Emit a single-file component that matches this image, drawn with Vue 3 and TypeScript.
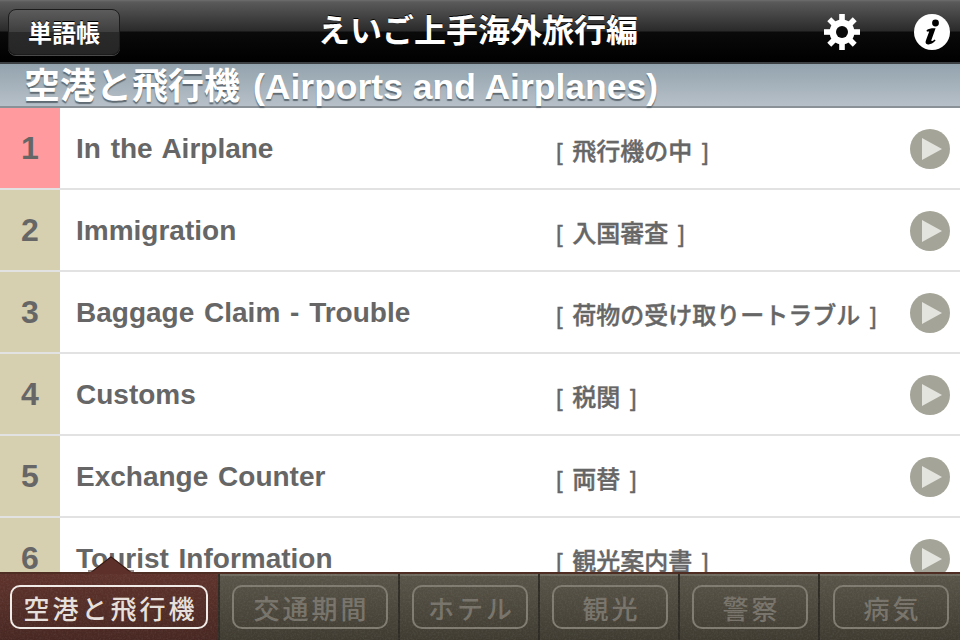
<script setup lang="ts">
interface Lesson { n: number; en: string; ja: string }
const lessons: Lesson[] = [
  { n: 1, en: 'In the Airplane', ja: '[ 飛行機の中 ]' },
  { n: 2, en: 'Immigration', ja: '[ 入国審査 ]' },
  { n: 3, en: 'Baggage Claim - Trouble', ja: '[ 荷物の受け取りートラブル ]' },
  { n: 4, en: 'Customs', ja: '[ 税関 ]' },
  { n: 5, en: 'Exchange Counter', ja: '[ 両替 ]' },
  { n: 6, en: 'Tourist Information', ja: '[ 観光案内書 ]' },
]
const tabs = ['空港と飛行機', '交通期間', 'ホテル', '観光', '警察', '病気']
</script>

<template>
  <div class="app">
    <header class="nav">
      <button class="back">単語帳</button>
      <h1 class="title">えいご上手海外旅行編</h1>
      <div class="nav-icons">
        <svg class="gear" width="36" height="36" viewBox="0 0 36 36">
          <g fill="#fff">
            <rect v-for="a in [0,45,90,135]" :key="a" x="15.2" y="0" width="5.6" height="36" :transform="`rotate(${a} 18 18)`" />
            <circle cx="18" cy="18" r="12.5" />
          </g>
          <circle cx="18" cy="18" r="6" fill="#0a0a0a" />
        </svg>
        <svg class="info" width="36" height="36" viewBox="0 0 36 36">
          <circle cx="18" cy="18" r="18" fill="#fff" />
          <circle cx="21.5" cy="9" r="3.4" fill="#000" />
          <path d="M12.5 16.2 C15 14.3 18 14 21.6 14.2 L17.4 26 C17 27.3 18 27.6 20.6 25.4 L21.6 26.6 C18.5 30 15.5 30.8 13.2 30.2 C11.4 29.6 11.3 28 11.9 26.4 L15.2 17.6 C14.6 17.3 13.6 17.5 13 17.8 Z" fill="#000" />
        </svg>
      </div>
    </header>
    <div class="section">空港と飛行機<span class="section-en">(Airports and Airplanes)</span></div>
    <main class="list">
      <div v-for="l in lessons" :key="l.n" class="row">
        <div class="num" :class="{ active: l.n === 1 }">{{ l.n }}</div>
        <div class="en">{{ l.en }}</div>
        <div class="ja">{{ l.ja }}</div>
        <svg class="play" width="40" height="40" viewBox="0 0 40 40">
          <circle cx="20" cy="20" r="20" fill="#a5a498" />
          <path d="M12 9 L32 20 L12 31 Z" fill="#e4e4de" />
        </svg>
      </div>
    </main>
    <nav class="tabbar">
      <div v-for="(t, i) in tabs" :key="t" class="tab" :class="{ on: i === 0 }">
        <span class="tab-btn">{{ t }}</span>
      </div>
      <svg class="caret" width="46" height="18" viewBox="0 0 46 18">
        <path d="M0 18 L23 0 L46 18 Z" fill="#5d3029" />
        <path d="M0 15 L5 15 L23 1 L41 15 L46 15" fill="none" stroke="#2e1a14" stroke-width="1" />
      </svg>
      <svg class="noise" width="960" height="68">
        <filter id="grain">
          <feTurbulence type="fractalNoise" baseFrequency="0.55" numOctaves="2" seed="4" />
          <feColorMatrix type="matrix" values="0 0 0 0 0.6  0 0 0 0 0.6  0 0 0 0 0.6  0.9 0 0 0 -0.35" />
        </filter>
        <rect width="960" height="68" filter="url(#grain)" opacity="0.2" />
      </svg>
    </nav>
  </div>
</template>

<style>
html, body { margin: 0; background: #fff; }
</style>

<style scoped>
.app {
  width: 960px;
  height: 640px;
  display: flex;
  flex-direction: column;
  overflow: hidden;
  font-family: "Liberation Sans", "Noto Sans CJK JP", sans-serif;
  background: #fff;
  position: relative;
}
.nav {
  height: 62px;
  flex: none;
  display: flex;
  align-items: center;
  position: relative;
  padding: 0 8px;
  background: linear-gradient(#6e6e6e 0, #5a5a5a 2px, #2a2a2a 31px, #0a0a0a 32px, #000 62px);
  border-bottom: 2px solid #3c3f42;
}
.back {
  width: 112px;
  height: 46px;
  margin-top: 1px;
  box-sizing: border-box;
  border: 1px solid #1c1c1c;
  border-radius: 8px;
  background: linear-gradient(#5c5c5c, #3e3e3e 50%, #2a2a2a 50%, #262626);
  box-shadow: 0 1px 0 #4a4a4a;
  color: #fff;
  font: 700 24px "Liberation Sans", "Noto Sans CJK JP", sans-serif;
  padding: 0;
  text-shadow: 0 -1px 0 #000;
}
.title {
  position: absolute;
  left: 318px;
  top: 11px;
  margin: 0;
  font-size: 32px;
  line-height: 40px;
  font-weight: 700;
  color: #fff;
  white-space: nowrap;
  text-shadow: 0 -1px 0 #000;
}
.nav-icons {
  margin-left: auto;
  display: flex;
  align-items: center;
  gap: 54px;
  padding-right: 2px;
  margin-top: 2px;
}
.section {
  height: 40px;
  flex: none;
  padding: 2px 0 0 24px;
  font-size: 36px;
  font-weight: 700;
  line-height: 42px;
  color: #fff;
  white-space: nowrap;
  background: linear-gradient(#93a3ae, #b7c0c8);
  border-bottom: 2px solid #8a9298;
  text-shadow: 0 2px 1px #5f6a72;
}
.section-en {
  font-size: 35.5px;
  margin-left: 13px;
}
.list {
  flex: 1;
  min-height: 0;
  overflow: hidden;
}
.row {
  height: 80px;
  display: flex;
  align-items: center;
  border-bottom: 2px solid #e2e2e2;
  color: #666;
}
.num {
  width: 60px;
  height: 80px;
  flex: none;
  display: flex;
  align-items: center;
  justify-content: center;
  background: #d6cfb0;
  font-size: 32px;
  font-weight: 700;
  box-sizing: border-box;
}
.num.active { background: #ff9a9e; }
.en {
  width: 480px;
  flex: none;
  padding-left: 16px;
  box-sizing: border-box;
  font-size: 28px;
  font-weight: 700;
  word-spacing: 2px;
  padding-top: 2px;
}
.ja {
  flex: 1;
  margin-left: 16px;
  font-size: 24px;
  font-weight: 500;
  word-spacing: 3px;
  white-space: nowrap;
  padding-top: 2px;
  -webkit-text-stroke: 0.4px #666;
}
.play { flex: none; margin-right: 10px; margin-top: 2px; }
.tabbar {
  height: 68px;
  flex: none;
  display: flex;
  position: relative;
  border-top: 2px solid #4f2d22;
  box-sizing: border-box;
  background: linear-gradient(#5a5549, #3f3b31);
}
.tab {
  width: 140px;
  flex: none;
  box-sizing: border-box;
  display: flex;
  align-items: center;
  justify-content: center;
  border-right: 2px solid #2f2c25;
  box-shadow: inset 0 2px 0 #706b5f;
}
.tab:nth-child(1) { width: 220px; }
.tab:nth-child(2) { width: 180px; }
.tab:nth-child(6) { border-right: none; }
.tab.on {
  background: linear-gradient(#5f332c, #482722);
  box-shadow: none;
}
.tab-btn {
  display: flex;
  align-items: center;
  justify-content: center;
  box-sizing: border-box;
  width: 116px;
  height: 44px;
  margin-left: 2px;
  border: 2px solid #7f7b70;
  border-radius: 10px;
  color: #77736a;
  font-size: 26px;
  font-weight: 500;
  letter-spacing: 3px;
  padding-left: 3px;
  white-space: nowrap;
}
.tab:nth-child(1) .tab-btn { width: 198px; margin-left: 0; color: #e8e0dc; border-color: #f2ece8; }
.tab:nth-child(2) .tab-btn { width: 156px; }
.caret {
  position: absolute;
  left: 88px;
  top: -18px;
}
.noise {
  position: absolute;
  left: 0;
  top: 0;
  pointer-events: none;
}
</style>
